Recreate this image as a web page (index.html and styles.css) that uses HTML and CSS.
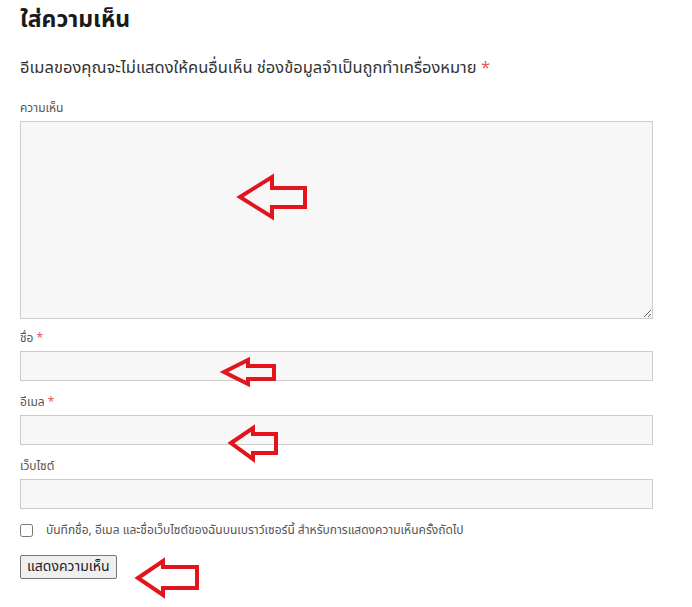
FILE: index.html
```html
<!DOCTYPE html>
<html lang="th">
<head>
    <meta charset="UTF-8">
    <meta name="viewport" content="width=device-width, initial-scale=1.0">
    <title>ใส่ความเห็น</title>
    <link rel="stylesheet" href="styles.css">
</head>
<body>
    <div class="comment-respond">
        <h3 class="reply-title">ใส่ความเห็น</h3>
        <p class="comment-notes">อีเมลของคุณจะไม่แสดงให้คนอื่นเห็น ช่องข้อมูลจำเป็นถูกทำเครื่องหมาย <span class="required">*</span></p>
        <div class="field first">
            <label for="comment">ความเห็น</label>
            <textarea id="comment" class="comment-box"></textarea>
        </div>
        <div class="field after-comment">
            <label for="author">ชื่อ <span class="required">*</span></label>
            <input id="author" type="text">
        </div>
        <div class="field">
            <label for="email">อีเมล <span class="required">*</span></label>
            <input id="email" type="text">
        </div>
        <div class="field">
            <label for="url">เว็บไซต์</label>
            <input id="url" type="text">
        </div>
        <div class="cookies">
            <input id="cookies" type="checkbox">
            <label for="cookies">บันทึกชื่อ, อีเมล และชื่อเว็บไซต์ของฉันบนเบราว์เซอร์นี้ สำหรับการแสดงความเห็นครั้งถัดไป</label>
        </div>
        <div class="form-submit">
            <button type="button" class="submit">แสดงความเห็น</button>
        </div>
    </div>
    <!-- red annotation arrows drawn on top of the form -->
    <svg class="arrows" width="692" height="607" viewBox="0 0 692 607">
        <g fill="none" stroke="#e3141c" stroke-width="4" stroke-linejoin="miter">
            <polygon points="240,197 272,177 272,188 305,188 305,207 272,207 272,217"/>
            <polygon points="224,372 248,360 248,366 274,366 274,379 248,379 248,384"/>
            <polygon points="231,443 253,428 253,434 276,434 276,453 253,453 253,459"/>
            <polygon points="138,578 163,561 163,567 197,567 197,588 163,588 163,595"/>
        </g>
    </svg>
</body>
</html>
```

FILE: styles.css
```css
body {
    margin: 0;
    padding: 0;
    background-color: #fff;
    font-family: Tahoma, "Noto Sans Thai", "Noto Sans", "DejaVu Sans", sans-serif;
    color: #333;
}
.comment-respond {
    width: 633px;
    padding: 5px 0 0 20px;
}
.reply-title {
    margin: 0;
    font-size: 23px;
    line-height: 30px;
    font-weight: 700;
    color: #1a1a1a;
}
.comment-notes {
    margin: 21px 0 0;
    font-size: 16.5px;
    line-height: 24px;
    color: #333;
}
.required {
    color: #e05a5a;
}
.field {
    margin-top: 11px;
}
.field.first {
    margin-top: 18px;
}
.field.after-comment {
    margin-top: 9px;
}
.field label {
    display: block;
    font-size: 12px;
    line-height: 20px;
    color: #555;
    margin-bottom: 3px;
}
.field input,
.field textarea {
    display: block;
    box-sizing: border-box;
    width: 100%;
    height: 30px;
    margin: 0;
    border: 1px solid #ccc;
    border-radius: 0;
    background-color: #f7f7f7;
    font-family: inherit;
}
.field textarea.comment-box {
    height: 198px;
    resize: both;
}
.cookies {
    display: flex;
    align-items: center;
    margin-top: 11px;
    height: 20px;
}
.cookies input {
    width: 13px;
    height: 13px;
    margin: 0 13px 0 0;
}
.cookies label {
    font-size: 12px;
    color: #555;
}
.form-submit {
    margin-top: 14px;
}
.submit {
    height: 24px;
    padding: 0 6px;
    font-family: inherit;
    font-size: 14px;
    color: #222;
    background-color: #efefef;
    border: 1px solid #767676;
    border-radius: 2px;
}
.arrows {
    position: absolute;
    top: 0;
    left: 0;
    pointer-events: none;
}
```
